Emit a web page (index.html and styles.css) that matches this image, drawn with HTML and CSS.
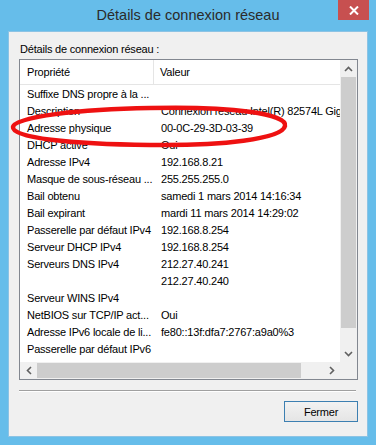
FILE: index.html
```html
<!DOCTYPE html>
<html lang="fr">

<head>
  <meta charset="UTF-8" />
  <meta name="viewport" content="width=device-width, initial-scale=1.0" />
  <title>Détails de connexion réseau</title>
  <link rel="stylesheet" href="styles.css">
</head>

<body>
  <div class="window">
    <div class="titlebar">
      <span class="title">Détails de connexion réseau</span>
      <button class="close-btn" aria-label="Fermer">
        <svg width="10" height="9" viewBox="0 0 10 9">
          <path d="M1 0.5 L9 8.5 M9 0.5 L1 8.5" stroke="#fff" stroke-width="2" fill="none" />
        </svg>
      </button>
    </div>

    <div class="client">
      <div class="label">Détails de connexion réseau :</div>

      <div class="listview">
        <div class="list-content">
          <div class="list-header">
            <div class="col-prop">Propriété</div>
            <div class="col-val">Valeur</div>
          </div>
          <div class="row"><span>Suffixe DNS propre à la ...</span><span></span></div>
          <div class="row"><span>Description</span><span>Connexion réseau Intel(R) 82574L Gigabit Network Connection</span></div>
          <div class="row"><span>Adresse physique</span><span>00-0C-29-3D-03-39</span></div>
          <div class="row"><span>DHCP activé</span><span>Oui</span></div>
          <div class="row"><span>Adresse IPv4</span><span>192.168.8.21</span></div>
          <div class="row"><span>Masque de sous-réseau ...</span><span>255.255.255.0</span></div>
          <div class="row"><span>Bail obtenu</span><span>samedi 1 mars 2014 14:16:34</span></div>
          <div class="row"><span>Bail expirant</span><span>mardi 11 mars 2014 14:29:02</span></div>
          <div class="row"><span>Passerelle par défaut IPv4</span><span>192.168.8.254</span></div>
          <div class="row"><span>Serveur DHCP IPv4</span><span>192.168.8.254</span></div>
          <div class="row"><span>Serveurs DNS IPv4</span><span>212.27.40.241</span></div>
          <div class="row"><span></span><span>212.27.40.240</span></div>
          <div class="row"><span>Serveur WINS IPv4</span><span></span></div>
          <div class="row"><span>NetBIOS sur TCP/IP act...</span><span>Oui</span></div>
          <div class="row"><span>Adresse IPv6 locale de li...</span><span>fe80::13f:dfa7:2767:a9a0%3</span></div>
          <div class="row"><span>Passerelle par défaut IPv6</span><span></span></div>
          <div class="row"><span>Serveur DNS IPv6</span><span></span></div>
        </div>

        <div class="vscroll">
          <div class="arrow">
            <svg width="9" height="6" viewBox="0 0 9 6"><path d="M1 5 L4.5 1.5 L8 5" stroke="#606060" stroke-width="1.6" fill="none" /></svg>
          </div>
          <div class="vthumb"></div>
          <div class="vtrack"></div>
          <div class="arrow">
            <svg width="9" height="6" viewBox="0 0 9 6"><path d="M1 1 L4.5 4.5 L8 1" stroke="#606060" stroke-width="1.6" fill="none" /></svg>
          </div>
        </div>

        <div class="hscroll">
          <div class="arrow">
            <svg width="6" height="9" viewBox="0 0 6 9"><path d="M5 1 L1.5 4.5 L5 8" stroke="#606060" stroke-width="1.6" fill="none" /></svg>
          </div>
          <div class="hthumb"></div>
          <div class="htrack"></div>
          <div class="arrow">
            <svg width="6" height="9" viewBox="0 0 6 9"><path d="M1 1 L4.5 4.5 L1 8" stroke="#606060" stroke-width="1.6" fill="none" /></svg>
          </div>
        </div>

        <div class="corner"></div>
      </div>

      <div class="separator"></div>

      <div class="actions">
        <button class="btn">Fermer</button>
      </div>
    </div>

    <svg class="circle-mark" width="376" height="445" viewBox="0 0 376 445">
      <path d="M150 108 C 232 106, 288 114, 285 126 C 282 139, 222 146, 150 145 C 70 144, 12 138, 13 127 C 14 117, 80 109, 150 108 Z"
        stroke="#ee1111" stroke-width="4.5" fill="none" />
    </svg>
  </div>
</body>

</html>
```

FILE: styles.css
```css
html,
body {
  margin: 0;
  padding: 0;
}

body {
  font-family: "Liberation Sans", Arial, sans-serif;
  font-size: 11px;
  letter-spacing: -0.2px;
  color: #000;
  background-color: #66bdea;
}

.window {
  position: relative;
  width: 376px;
  height: 445px;
  background-color: #66bdea;
  display: flex;
  flex-direction: column;
  overflow: hidden;
}

.titlebar {
  height: 31px;
  flex: none;
  display: flex;
  justify-content: center;
  position: relative;
}

.title {
  font-size: 14.5px;
  letter-spacing: 0;
  line-height: 31px;
  color: #2b2b2b;
}

.close-btn {
  position: absolute;
  top: 0;
  right: 7px;
  width: 31px;
  height: 20px;
  border: none;
  padding: 0;
  background-color: #c75050;
  display: flex;
  align-items: center;
  justify-content: center;
}

.client {
  flex: none;
  margin: 0 8px;
  height: 406px;
  box-sizing: border-box;
  background-color: #f0f0f0;
  border: 1px solid #8cc3e4;
  padding: 9px 9px 0 10px;
  display: flex;
  flex-direction: column;
}

.label {
  line-height: 17px;
  height: 17px;
  padding-left: 1px;
}

.listview {
  margin-top: 1px;
  width: 339px;
  height: 321px;
  box-sizing: border-box;
  border: 1px solid #828790;
  background-color: #fff;
  display: grid;
  grid-template-columns: 320px 17px;
  grid-template-rows: 302px 17px;
}

.list-content {
  overflow: hidden;
  white-space: nowrap;
}

.list-header {
  display: grid;
  grid-template-columns: 134px auto;
  height: 24px;
  line-height: 25px;
  border-bottom: 1px solid #e5e5e5;
}

.col-prop {
  padding-left: 7px;
  border-right: 1px solid #e5e5e5;
}

.col-val {
  padding-left: 6px;
}

.row {
  display: grid;
  grid-template-columns: 134px auto;
  height: 17px;
  line-height: 19px;
}

.row span {
  padding-left: 7px;
}

.vscroll {
  background-color: #f0f0f0;
  display: flex;
  flex-direction: column;
}

.vscroll .arrow {
  height: 17px;
  flex: none;
  display: flex;
  align-items: center;
  justify-content: center;
}

.vthumb {
  height: 251px;
  margin: 0 1px;
  background-color: #cdcdcd;
}

.vtrack {
  flex: 1;
}

.hscroll {
  background-color: #f0f0f0;
  display: flex;
}

.hscroll .arrow {
  width: 17px;
  flex: none;
  display: flex;
  align-items: center;
  justify-content: center;
}

.hthumb {
  width: 264px;
  margin: 1px 0;
  background-color: #cdcdcd;
}

.htrack {
  flex: 1;
}

.corner {
  background-color: #f0f0f0;
}

.separator {
  margin-top: 10px;
  width: 337px;
  height: 1px;
  background-color: #a0a0a0;
  border-bottom: 1px solid #fff;
}

.actions {
  display: flex;
  justify-content: flex-end;
  width: 339px;
  margin-top: 9px;
}

.btn {
  width: 74px;
  height: 21px;
  border: 1px solid #3c7fb1;
  background: linear-gradient(#f2f2f2, #e5e5e5);
  font-family: "Liberation Sans", Arial, sans-serif;
  font-size: 11px;
  letter-spacing: -0.2px;
  color: #000;
  padding: 0;
}

.circle-mark {
  position: absolute;
  top: 0;
  left: 0;
  pointer-events: none;
}
```
